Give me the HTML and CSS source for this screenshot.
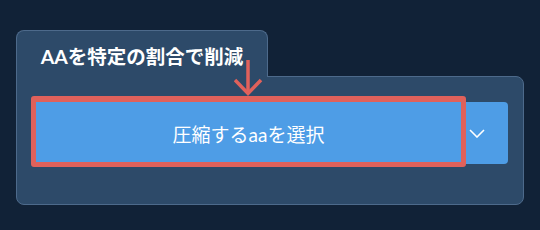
FILE: index.html
```html
<html>
  <head>
    <link rel="stylesheet" href="styles.css">
  </head>
  <body>
    <div class="page">
      <div class="tab">AAを特定の割合で削減</div>
      <div class="panel">
        <div class="split">
          <button class="split-main">圧縮するaaを選択</button>
          <button class="split-toggle">
            <svg width="16" height="9" viewBox="0 0 16 9">
              <polyline points="1,1 8,8 15,1" fill="none" stroke="#fff" stroke-width="1.6" />
            </svg>
          </button>
          <div class="highlight"></div>
        </div>
      </div>
      <svg class="pointer" width="30" height="38" viewBox="0 0 30 38">
        <line x1="14" y1="0" x2="14" y2="34" stroke="#e0615b" stroke-width="3.5" />
        <polyline points="1,20 14,33.5 27,20" fill="none" stroke="#e0615b" stroke-width="3.5" />
      </svg>
    </div>
  </body>
</html>
```

FILE: styles.css
```css
html,
body {
  margin: 0;
  padding: 0;
}
body {
  background: #112237;
  font-family: "Lato", "Noto Sans CJK JP", sans-serif;
  width: 540px;
  height: 230px;
  overflow: hidden;
}
.page {
  position: relative;
  padding: 30px 0 0 16px;
}
.tab {
  position: relative;
  z-index: 1;
  box-sizing: border-box;
  width: 252px;
  height: 47px;
  margin-bottom: -1px;
  padding-top: 14px;
  background: #2d4a69;
  border: 1px solid #4d6a8b;
  border-bottom: none;
  border-radius: 8px 8px 0 0;
  color: #fff;
  font-size: 19.5px;
  font-weight: bold;
  line-height: 24px;
  text-align: center;
  white-space: nowrap;
}
.panel {
  box-sizing: border-box;
  width: 508px;
  height: 129px;
  padding: 25px 15px 0 15px;
  background: #2d4a69;
  border: 1px solid #4d6a8b;
  border-radius: 0 8px 8px 8px;
}
.split {
  position: relative;
  display: flex;
  height: 62px;
}
.split button {
  border: none;
  margin: 0;
  padding: 0;
  background: #4e9de6;
  color: #fff;
  font-family: inherit;
}
.split-main {
  flex: 1;
  font-size: 19px;
  padding-left: 4px !important;
  border-radius: 4px 0 0 4px;
}
.split-toggle {
  width: 47px;
  display: flex;
  align-items: center;
  justify-content: flex-start;
  padding-left: 8px !important;
  border-radius: 0 4px 4px 0;
}
.highlight {
  position: absolute;
  left: -1px;
  top: -6px;
  width: 435px;
  height: 71px;
  box-sizing: border-box;
  border: 5px solid #e0615b;
  border-top-width: 6px;
  border-radius: 3px;
}
.pointer {
  position: absolute;
  z-index: 2;
  left: 234px;
  top: 60px;
}
```
